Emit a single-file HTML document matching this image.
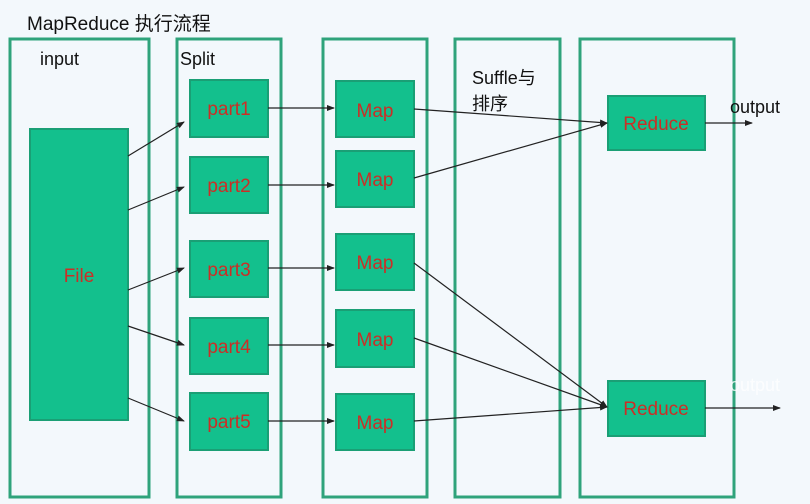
<!DOCTYPE html>
<html><head><meta charset="utf-8"><style>
html,body{margin:0;padding:0;background:#f3f8fc;}
svg{display:block}
text{font-family:"Liberation Sans","Noto Sans CJK SC",sans-serif;}
</style></head><body>
<svg width="810" height="504" viewBox="0 0 810 504" xmlns="http://www.w3.org/2000/svg">
<defs><marker id="a" markerWidth="8" markerHeight="8" refX="7" refY="3" orient="auto" markerUnits="userSpaceOnUse"><path d="M0,0 L8,3 L0,6 z" fill="#222"/></marker></defs>
<rect width="810" height="504" fill="#f3f8fc"/>
<text x="27" y="30" font-size="19" fill="#111">MapReduce 执行流程</text>
<g fill="none" stroke="#2fa37b" stroke-width="3">
<rect x="10" y="39" width="139" height="458"/>
<rect x="177" y="39" width="104" height="458"/>
<rect x="323" y="39" width="104" height="458"/>
<rect x="455" y="39" width="105" height="458"/>
<rect x="580" y="39" width="154" height="458"/>
</g>
<text x="40" y="65" font-size="18" fill="#111">input</text>
<text x="180" y="65" font-size="18" fill="#111">Split</text>
<text x="472" y="84" font-size="18" fill="#111">Suffle与</text>
<text x="472" y="110" font-size="18" fill="#111">排序</text>
<text x="730" y="113" font-size="18" fill="#111">output</text>
<text x="730" y="391" font-size="18" fill="#fff" opacity="0.8">output</text>
<g fill="#13c08d" stroke="#1a9f75" stroke-width="2">
<rect x="30" y="129" width="98" height="291"/>
<rect x="190" y="80" width="78" height="57"/>
<rect x="190" y="157" width="78" height="56"/>
<rect x="190" y="241" width="78" height="56"/>
<rect x="190" y="318" width="78" height="56"/>
<rect x="190" y="393" width="78" height="57"/>
<rect x="336" y="81" width="78" height="56"/>
<rect x="336" y="151" width="78" height="56"/>
<rect x="336" y="234" width="78" height="56"/>
<rect x="336" y="310" width="78" height="57"/>
<rect x="336" y="394" width="78" height="56"/>
<rect x="608" y="96" width="97" height="54"/>
<rect x="608" y="381" width="97" height="55"/>
</g>
<g font-size="19" fill="#cc2e26" text-anchor="middle">
<text x="79" y="282">File</text>
<text x="229" y="115">part1</text>
<text x="229" y="192">part2</text>
<text x="229" y="276">part3</text>
<text x="229" y="353">part4</text>
<text x="229" y="428">part5</text>
<text x="375" y="117">Map</text>
<text x="375" y="186">Map</text>
<text x="375" y="269">Map</text>
<text x="375" y="346">Map</text>
<text x="375" y="429">Map</text>
<text x="656" y="130">Reduce</text>
<text x="656" y="415">Reduce</text>
</g>
<g stroke="#222" stroke-width="1.2" fill="none" marker-end="url(#a)">
<line x1="128" y1="156" x2="184" y2="122"/>
<line x1="128" y1="210" x2="184" y2="187"/>
<line x1="128" y1="290" x2="184" y2="268"/>
<line x1="128" y1="326" x2="184" y2="345"/>
<line x1="128" y1="398" x2="184" y2="421"/>
<line x1="268" y1="108" x2="334" y2="108"/>
<line x1="268" y1="185" x2="334" y2="185"/>
<line x1="268" y1="268" x2="334" y2="268"/>
<line x1="268" y1="345" x2="334" y2="345"/>
<line x1="268" y1="421" x2="334" y2="421"/>
<line x1="414" y1="109" x2="607" y2="123"/>
<line x1="414" y1="178" x2="607" y2="123"/>
<line x1="414" y1="263" x2="607" y2="407"/>
<line x1="414" y1="338" x2="607" y2="407"/>
<line x1="414" y1="421" x2="607" y2="407"/>
<line x1="705" y1="123" x2="752" y2="123"/>
<line x1="705" y1="408" x2="780" y2="408"/>
</g>
</svg>
</body></html>
